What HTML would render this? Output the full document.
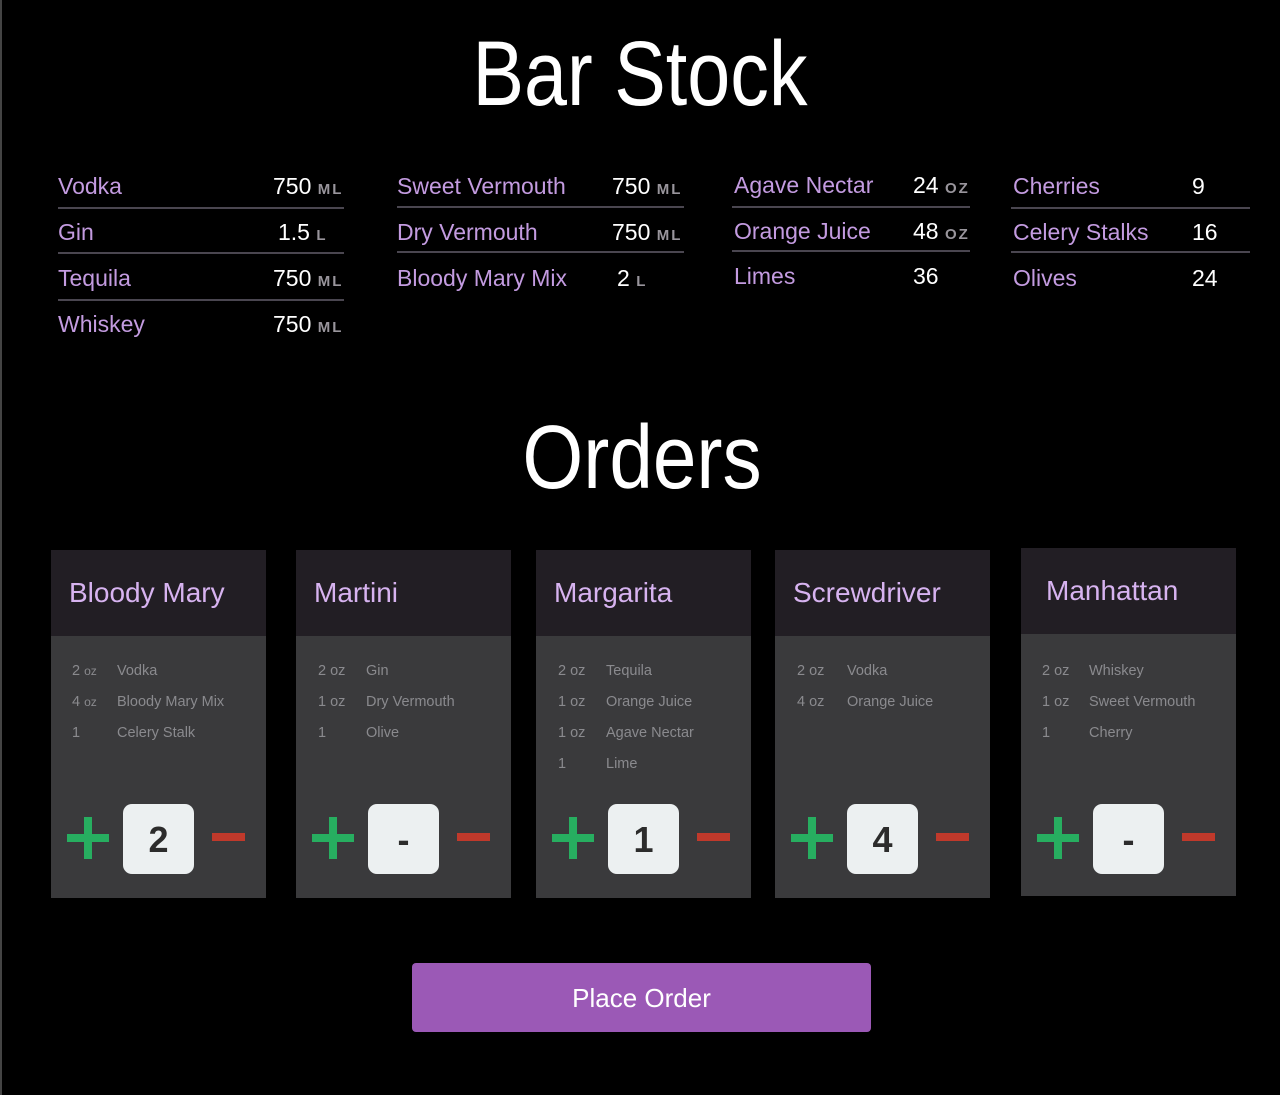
<!DOCTYPE html>
<html><head><style>
*{margin:0;padding:0;box-sizing:border-box}
body{width:1280px;height:1095px;background:#000;position:relative;overflow:hidden;font-family:"Liberation Sans",sans-serif}
.edge{position:absolute;left:0;top:0;width:2px;height:1095px;background:#444}
.a{position:absolute;white-space:nowrap}
.t{color:#fff;font-weight:300;transform-origin:center}
.n{color:#c39be0;font-size:23px;line-height:28px}
.v{color:#fff;font-size:23px;line-height:28px}
.u{color:#99959c;font-size:15px;font-weight:bold;letter-spacing:2px}
.ln{position:absolute;height:2px;background:#4a4650}
.card{position:absolute;width:215px;height:348px;background:#3a3a3c}
.hd{height:86px;background:#221e24;color:#d7b3f0;font-size:28px;line-height:86px;padding-left:18px}
.ing{position:absolute;color:#8a8a8e;font-size:14.5px}
.plus{position:absolute;left:16px;top:267px;width:42px;height:42px}
.plus:before{content:"";position:absolute;left:17px;top:0;width:8px;height:42px;background:#27ae60}
.plus:after{content:"";position:absolute;left:0;top:17px;width:42px;height:8px;background:#27ae60}
.box{position:absolute;left:72px;top:254px;width:71px;height:70px;background:#ecf0f1;border-radius:9px;color:#2c2c2c;font-weight:bold;font-size:36px;text-align:center;line-height:72px}
.mn{position:absolute;left:161px;top:283px;width:33px;height:8px;background:#c0392b}
.btn{position:absolute;left:412px;top:963px;width:459px;height:69px;background:#9b59b6;border-radius:4px;color:#fff;font-size:26px;text-align:center;line-height:70px}
</style></head><body>
<div class="edge"></div>
<div class="a t" style="left:340px;top:22px;width:600px;text-align:center;font-size:92px;line-height:104px;transform:scaleX(0.84)">Bar Stock</div>

<div class="a n" style="left:58px;top:172px">Vodka</div><div class="a v" style="left:273px;top:172px">750 <span class="u">ML</span></div>
<div class="ln" style="left:58px;top:207px;width:286px"></div>
<div class="a n" style="left:58px;top:218px">Gin</div><div class="a v" style="left:278px;top:218px">1.5 <span class="u">L</span></div>
<div class="ln" style="left:58px;top:252px;width:286px"></div>
<div class="a n" style="left:58px;top:264px">Tequila</div><div class="a v" style="left:273px;top:264px">750 <span class="u">ML</span></div>
<div class="ln" style="left:58px;top:299px;width:286px"></div>
<div class="a n" style="left:58px;top:310px">Whiskey</div><div class="a v" style="left:273px;top:310px">750 <span class="u">ML</span></div>

<div class="a n" style="left:397px;top:172px">Sweet Vermouth</div><div class="a v" style="left:612px;top:172px">750 <span class="u">ML</span></div>
<div class="ln" style="left:397px;top:206px;width:287px"></div>
<div class="a n" style="left:397px;top:218px">Dry Vermouth</div><div class="a v" style="left:612px;top:218px">750 <span class="u">ML</span></div>
<div class="ln" style="left:397px;top:251px;width:287px"></div>
<div class="a n" style="left:397px;top:264px">Bloody Mary Mix</div><div class="a v" style="left:617px;top:264px">2 <span class="u">L</span></div>

<div class="a n" style="left:734px;top:171px">Agave Nectar</div><div class="a v" style="left:913px;top:171px">24 <span class="u">OZ</span></div>
<div class="ln" style="left:732px;top:206px;width:238px"></div>
<div class="a n" style="left:734px;top:217px">Orange Juice</div><div class="a v" style="left:913px;top:217px">48 <span class="u">OZ</span></div>
<div class="ln" style="left:732px;top:250px;width:238px"></div>
<div class="a n" style="left:734px;top:262px">Limes</div><div class="a v" style="left:913px;top:262px">36</div>

<div class="a n" style="left:1013px;top:172px">Cherries</div><div class="a v" style="left:1192px;top:172px">9</div>
<div class="ln" style="left:1011px;top:207px;width:239px"></div>
<div class="a n" style="left:1013px;top:218px">Celery Stalks</div><div class="a v" style="left:1192px;top:218px">16</div>
<div class="ln" style="left:1011px;top:251px;width:239px"></div>
<div class="a n" style="left:1013px;top:264px">Olives</div><div class="a v" style="left:1192px;top:264px">24</div>

<div class="a t" style="left:342px;top:406px;width:600px;text-align:center;font-size:90px;line-height:104px;transform:scaleX(0.87)">Orders</div>

<div class="card" style="left:51px;top:550px"><div class="hd">Bloody Mary</div>
<div class="ing" style="left:21px;top:113px">2 <small>oz</small></div><div class="ing" style="left:66px;top:113px">Vodka</div>
<div class="ing" style="left:21px;top:144px">4 <small>oz</small></div><div class="ing" style="left:66px;top:144px">Bloody Mary Mix</div>
<div class="ing" style="left:21px;top:175px">1</div><div class="ing" style="left:66px;top:175px">Celery Stalk</div>
<div class="plus"></div><div class="box">2</div><div class="mn"></div></div>

<div class="card" style="left:296px;top:550px"><div class="hd">Martini</div>
<div class="ing" style="left:22px;top:113px">2 oz</div><div class="ing" style="left:70px;top:113px">Gin</div>
<div class="ing" style="left:22px;top:144px">1 oz</div><div class="ing" style="left:70px;top:144px">Dry Vermouth</div>
<div class="ing" style="left:22px;top:175px">1</div><div class="ing" style="left:70px;top:175px">Olive</div>
<div class="plus"></div><div class="box">-</div><div class="mn"></div></div>

<div class="card" style="left:536px;top:550px"><div class="hd">Margarita</div>
<div class="ing" style="left:22px;top:113px">2 oz</div><div class="ing" style="left:70px;top:113px">Tequila</div>
<div class="ing" style="left:22px;top:144px">1 oz</div><div class="ing" style="left:70px;top:144px">Orange Juice</div>
<div class="ing" style="left:22px;top:175px">1 oz</div><div class="ing" style="left:70px;top:175px">Agave Nectar</div>
<div class="ing" style="left:22px;top:206px">1</div><div class="ing" style="left:70px;top:206px">Lime</div>
<div class="plus"></div><div class="box">1</div><div class="mn"></div></div>

<div class="card" style="left:775px;top:550px"><div class="hd">Screwdriver</div>
<div class="ing" style="left:22px;top:113px">2 oz</div><div class="ing" style="left:72px;top:113px">Vodka</div>
<div class="ing" style="left:22px;top:144px">4 oz</div><div class="ing" style="left:72px;top:144px">Orange Juice</div>
<div class="plus"></div><div class="box">4</div><div class="mn"></div></div>

<div class="card" style="left:1021px;top:548px"><div class="hd" style="padding-left:25px">Manhattan</div>
<div class="ing" style="left:21px;top:115px">2 oz</div><div class="ing" style="left:68px;top:115px">Whiskey</div>
<div class="ing" style="left:21px;top:146px">1 oz</div><div class="ing" style="left:68px;top:146px">Sweet Vermouth</div>
<div class="ing" style="left:21px;top:177px">1</div><div class="ing" style="left:68px;top:177px">Cherry</div>
<div class="plus" style="top:269px"></div><div class="box" style="top:256px">-</div><div class="mn" style="top:285px"></div></div>

<div class="btn">Place Order</div>
</body></html>
